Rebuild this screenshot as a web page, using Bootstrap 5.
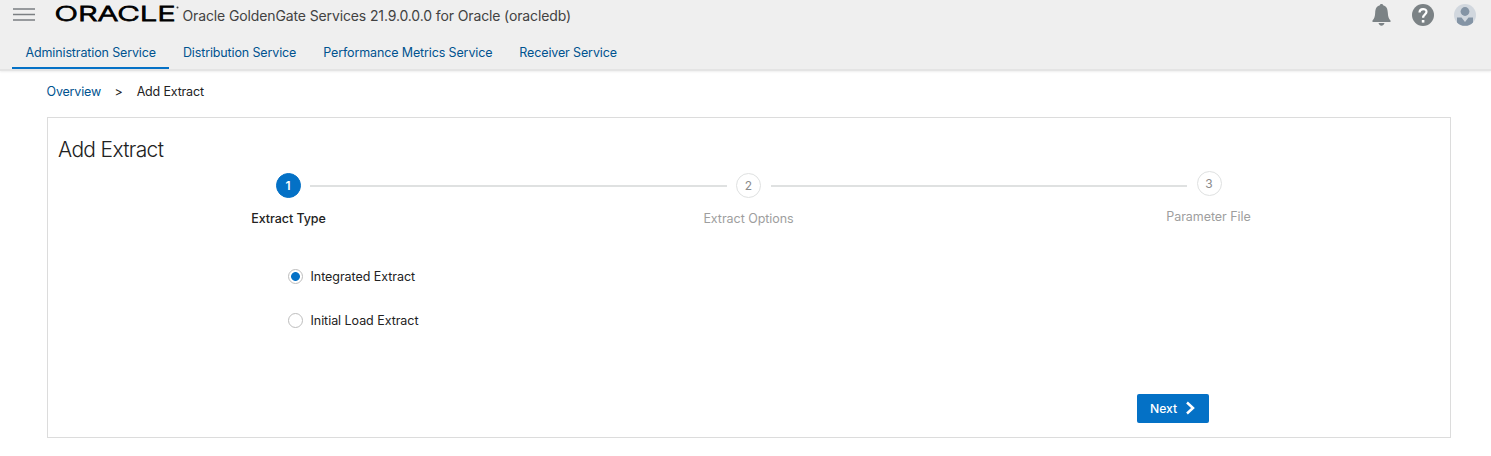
<!DOCTYPE html>
<html lang="en">
<head>
<meta charset="utf-8">
<meta name="viewport" content="width=device-width, initial-scale=1">
<title>Add Extract</title>
<link href="https://cdn.jsdelivr.net/npm/bootstrap@5.3.0/dist/css/bootstrap.min.css" rel="stylesheet">
<style>
body{font-family:Inter,"Liberation Sans",sans-serif;font-size:12.5px;line-height:20px;color:#222;background:#fff;letter-spacing:-.05px}
a{color:#00538f;text-decoration:none}
.app-header{background:#efefef;height:71px;border-bottom:2px solid #e4e4e4;box-shadow:0 1px 2px rgba(0,0,0,.07)}
.brand-row{height:36px;padding:0 13px 0 12px}
.app-title{font-size:14px;color:#424242;margin:6px 0 0 3.5px;letter-spacing:-.125px}
.svc-tabs{padding-left:12px}
.svc-tabs .nav-link{color:#00538f;padding:7px 13.5px 4px;height:33px;border-bottom:2px solid transparent;border-radius:0;letter-spacing:-.13px}
.svc-tabs .nav-link.active{border-color:#0471c6}
.crumbs{margin:10.5px 0 0 46.5px;height:20px;letter-spacing:-.17px}
.crumbs .sep{margin:0 14px 0 13.5px}
.wizard{margin:15.5px 40px 0 47px;height:321px;border:1px solid #dcdcdc;border-radius:0}
.wizard h1{font-size:21px;line-height:28px;font-weight:300;margin:18px 0 0 10px;letter-spacing:-.66px}
.train{margin:8px 219px 0 218px;height:28px}
.step-cell{width:44px;margin-top:-2px}
.dot{width:25px;height:25px;border:1.5px solid #dfe1e1;color:#8b8b8b;font-size:12px;padding-top:1px}
.dot.current{background:#0471c6;border-color:#0471c6;color:#fff;font-weight:600}
.rail{height:2px;background:#dfe1e1}
.step-cell.lift{margin-top:-5px}
.labels{width:1380px;margin-left:10.5px;margin-top:9px;color:#9e9e9e}
.labels .now{color:#222;font-weight:500}
.labels .raised{margin-top:-2px}
.choices{margin:37px 0 0 240px}
.choices .form-check{height:20px;min-height:0;margin:0 0 24px;padding:0}
.choices label{padding-top:2px}
.choices .form-check-input{width:15px;height:15px;margin:0 7.5px 0 0;float:none;border:1px solid #bdbdbd;box-shadow:none}
.choices .form-check-input:checked{background:radial-gradient(circle,#0471c6 0 4px,#fff 4.8px)}
.btn-next{background:#0471c6;color:#fff;width:72px;height:29px;border-radius:2px;padding:1px 0 0 13px;font-size:12.2px;font-weight:500;margin:64px 241px 0 auto}
.btn-next svg{margin:-3px 0 0 8px}
.btn-next:hover{background:#0462b1;color:#fff}
</style>
</head>
<body>
<header class="app-header">
 <div class="brand-row d-flex align-items-start">
  <svg width="23" height="24" viewBox="0 0 23 24"><path d="M1 9h22M1 14.5h22M1 20h22" stroke="#7b7f82" stroke-width="1.6"/></svg>
  <svg class="ms-3" width="128" height="26" viewBox="50 0 128 26"><g font-family="Inter" font-size="20" font-weight="300" stroke="#000" stroke-width=".8"><text x="53.5" y="20.9" textLength="121" lengthAdjust="spacingAndGlyphs">ORACLE</text></g><circle cx="176.5" cy="7.5" r="1" fill="#444"/></svg>
  <span class="app-title">Oracle GoldenGate Services 21.9.0.0.0 for Oracle (oracledb)</span>
  <div class="d-flex ms-auto">
   <svg width="108" height="28" viewBox="1370 0 108 28">
    <path d="M1381.5 4c.9 0 1.5.5 1.6 1.2 3.4.8 4.5 3.6 4.7 7.2.2 4 .8 6 2.7 8.100V22h-18v-1.500c1.900-2.100 2.500-4.100 2.700-8.100.2-3.600 1.300-6.400 4.700-7.200.1-.7.7-1.200 1.600-1.200zM1378.500 23h6c-.6 1.700-1.600 2.700-3 2.700s-2.400-1-3-2.700z" fill="#7b8285"/>
    <circle cx="1423" cy="15" r="11" fill="#7b8285"/>
    <path d="M1419.500 12.500c0-4.500 7-4.500 7-.7 0 2.600-3.400 2.500-3.400 6" fill="none" stroke="#fff" stroke-width="2.200"/><rect x="1421.800" y="20" width="2.600" height="2.600" fill="#fff"/>
    <circle cx="1465" cy="15" r="11" fill="#d1d7de"/><circle cx="1465" cy="11.500" r="4.400" fill="#8494a5"/>
    <path d="M1457 17.500h4.500l3.500 4.500 3.500-4.500h4.500v4.900a11 11 0 0 1-16 0z" fill="#8494a5"/>
   </svg>
  </div>
 </div>
 <nav class="nav svc-tabs">
  <a class="nav-link active" href="#">Administration Service</a>
  <a class="nav-link" href="#">Distribution Service</a>
  <a class="nav-link" href="#">Performance Metrics Service</a>
  <a class="nav-link" href="#">Receiver Service</a>
 </nav>
</header>
<main>
 <div class="crumbs d-flex"><a href="#">Overview</a><span class="sep">&gt;</span><span>Add Extract</span></div>
 <section class="wizard">
  <h1>Add Extract</h1>
  <div class="train d-flex align-items-center">
   <div class="step-cell d-flex justify-content-center"><span class="dot current rounded-circle d-flex align-items-center justify-content-center">1</span></div>
   <div class="rail flex-fill"></div>
   <div class="step-cell d-flex justify-content-center"><span class="dot rounded-circle d-flex align-items-center justify-content-center">2</span></div>
   <div class="rail flex-fill"></div>
   <div class="step-cell d-flex justify-content-center lift"><span class="dot rounded-circle d-flex align-items-center justify-content-center">3</span></div>
  </div>
  <div class="labels row g-0 text-center">
   <div class="col now">Extract Type</div><div class="col">Extract Options</div><div class="col"><div class="raised">Parameter File</div></div>
  </div>
  <div class="choices">
   <div class="form-check d-flex align-items-center"><input class="form-check-input" type="radio" name="kind" id="k1" checked><label for="k1">Integrated Extract</label></div>
   <div class="form-check d-flex align-items-center"><input class="form-check-input" type="radio" name="kind" id="k2"><label for="k2">Initial Load Extract</label></div>
  </div>
  <button class="btn btn-next border-0 d-flex align-items-center">Next<svg width="11" height="14" viewBox="0 0 11 14"><path d="M2 1.5l6 5.500-6 5.500" fill="none" stroke="#fff" stroke-width="2.500"/></svg></button>
 </section>
</main>
<script src="https://cdn.jsdelivr.net/npm/bootstrap@5.3.0/dist/js/bootstrap.bundle.min.js"></script>
</body>
</html>
